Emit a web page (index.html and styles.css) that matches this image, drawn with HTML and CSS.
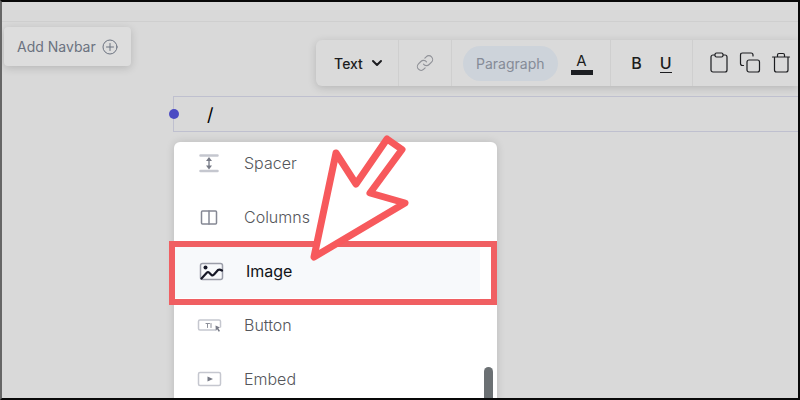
FILE: index.html
```html
<!DOCTYPE html>
<html lang="en">
<head>
<meta charset="utf-8">
<title>Page editor</title>
<link rel="stylesheet" href="styles.css">
</head>
<body>
<div class="page">
  <header class="topbar"></header>
  <main class="workspace">
    <aside class="side">
      <button class="add-navbar" type="button">Add Navbar
        <svg width="16" height="16" viewBox="0 0 16 16"><circle cx="8" cy="8" r="7"/><path d="M8 4.5v7M4.5 8h7"/></svg>
      </button>
    </aside>
    <section class="editor">
      <div class="toolbar" role="toolbar" aria-label="Formatting">
        <button class="tool tool-type" type="button">Text
          <svg width="12" height="12" viewBox="0 0 12 12"><path d="M2 4l4 4 4-4"/></svg>
        </button>
        <button class="tool tool-link" type="button" aria-label="Link">
          <svg width="18" height="18" viewBox="0 0 24 24"><path d="M10 13.500a5 5 0 0 0 7.500.5l3.200-3.200a5 5 0 0 0-7.100-7.100L11.800 5.500M14 10.500a5 5 0 0 0-7.500-.5l-3.200 3.200a5 5 0 0 0 7.100 7.100l1.800-1.800"/></svg>
        </button>
        <div class="group group-style">
          <button class="pill" type="button">Paragraph</button>
          <button class="color" type="button" aria-label="Text color">A</button>
        </div>
        <div class="group group-marks">
          <button class="mark" type="button">B</button>
          <button class="mark underline" type="button">U</button>
        </div>
        <div class="group group-actions">
          <button class="action" type="button" aria-label="Paste">
            <svg width="20" height="22" viewBox="0 0 20 22"><rect x="2" y="3" width="16" height="17" rx="2"/><rect class="clip" x="6" y="1" width="8" height="4" rx="1.500"/></svg>
          </button>
          <button class="action" type="button" aria-label="Copy">
            <svg width="22" height="22" viewBox="0 0 22 22"><rect x="8" y="8" width="12.500" height="12" rx="2"/><path d="M4.500 13.500H3.500q-2 0-2-2V3q0-2 2-2H12q2 0 2 2V4"/></svg>
          </button>
          <button class="action" type="button" aria-label="Delete">
            <svg width="20" height="22" viewBox="0 0 20 22"><path d="M1.500 5h17M3.500 5V18q0 2 2 2H15q2 0 2-2V5M6.500 5V3q0-1.500 1.500-1.500h4q1.500 0 1.500 1.500v2"/></svg>
          </button>
        </div>
      </div>
      <div class="block" contenteditable="true" role="textbox" aria-label="Paragraph block">/</div>
      <div class="menu">
        <ul class="options">
          <li><button class="option" type="button">
            <svg width="36" height="24" viewBox="0 0 36 24"><path class="faint thick" d="M10.500 4.500h17M10.500 20h17"/><path class="mid" d="M19 8v8"/><path class="solid" d="M19 6l3 4h-6zM19 18.500l3-4h-6z"/></svg>
            <span>Spacer</span></button></li>
          <li><button class="option" type="button">
            <svg width="36" height="24" viewBox="0 0 36 24"><rect class="mid" x="11.500" y="6" width="15" height="13" rx="1"/><path class="mid" d="M19 6v13"/></svg>
            <span>Columns</span></button></li>
          <li class="selected"><button class="option" type="button">
            <svg width="36" height="24" viewBox="0 0 36 24"><rect class="light" x="8.500" y="4.500" width="22" height="16" rx="2"/><circle class="dark-dot" cx="13.500" cy="8.500" r="2"/><path class="dark" d="M9.500 19.500l5.500-6q1-1 2 0l2.500 2.500q1.500 1 2.500-.5l4-4.500q1.500-1 4 .5"/></svg>
            <span>Image</span></button></li>
          <li><button class="option" type="button">
            <svg width="36" height="24" viewBox="0 0 36 24"><path class="faint" d="M26 17H10q-1.500 0-1.500-1.500v-7Q8.500 7 10 7H29q1.500 0 1.500 1.500V14"/><path class="mark-line" d="M16 10.500h3.500M17.500 10.500v4M21 10.500v4"/><path class="solid" d="M25.500 12.500l4.500 2-1.700.8 1.700 2.700-1.300.8-1.600-2.600-1.300 1.300z"/></svg>
            <span>Button</span></button></li>
          <li><button class="option" type="button">
            <svg width="36" height="24" viewBox="0 0 36 24"><rect class="faint" x="8.500" y="5.500" width="22" height="13" rx="1.500"/><path class="solid" d="M17.500 9.500l5.500 2.500-5.500 2.500z"/></svg>
            <span>Embed</span></button></li>
        </ul>
        <div class="thumb"></div>
        <div class="highlight"></div>
        <svg class="arrow" width="110" height="136" viewBox="0 0 110 136"><path d="M9 127L31 23 51 54 82 9 97 19.500 65 63 100 73z"/></svg>
      </div>
    </section>
  </main>
</div>
</body>
</html>
```
FILE: styles.css
```css
* { box-sizing: border-box; }
body {
  margin: 0;
  font-family: Inter, "Liberation Sans", sans-serif;
  font-size: 16px;
  background: #d9d9d9;
}
button {
  margin: 0;
  padding: 0;
  border: 0;
  background: none;
  font: inherit;
  color: inherit;
}
svg {
  flex: none;
  fill: none;
  stroke: currentColor;
  stroke-linecap: round;
  stroke-linejoin: round;
}
.page {
  display: flex;
  flex-direction: column;
  height: 100vh;
  overflow: hidden;
  border: 2px solid #080808;
  border-left-color: #666;
  background: #d9d9d9;
}
.topbar {
  flex: none;
  height: 20px;
  border-bottom: 1px solid #cfcfcf;
}
.workspace {
  flex: 1;
  display: grid;
  grid-template-columns: 171px minmax(0, 1fr);
}
.side { padding: 5px 0 0 2px; }
.add-navbar {
  display: flex;
  align-items: center;
  gap: 6px;
  height: 39px;
  padding: 0 13px;
  border-radius: 4px;
  background: #dddddd;
  box-shadow: 0 2px 8px rgba(0, 0, 0, .16);
  font-size: 14px;
  color: #6b7280;
}
.toolbar {
  display: flex;
  height: 46px;
  margin: 18px 0 0 143px;
  border-radius: 6px 0 0 6px;
  background: #dadada;
  box-shadow: 0 2px 8px rgba(0, 0, 0, .16);
  color: #1c1d20;
}
.tool, .group {
  flex: none;
  display: flex;
  align-items: center;
  justify-content: center;
  border-right: 1px solid #cfcfcf;
}
.tool-type {
  width: 83px;
  gap: 8px;
  padding-left: 3px;
  font-size: 14px;
  font-weight: 500;
}
.tool-type svg { stroke-width: 2; }
.tool-link { width: 53px; color: #909298; }
.tool-link svg { stroke-width: 1.5; }
.group-style { width: 159px; gap: 13px; justify-content: flex-start; padding-left: 11px; }
.group-marks { width: 82px; gap: 18px; }
.group-actions { gap: 10px; padding-left: 16px; border-right: 0; }
.pill {
  height: 35px;
  padding: 0 13px;
  border-radius: 18px;
  background: #cdd3da;
  font-size: 14px;
  color: #858b97;
}
.color {
  width: 22px;
  border-bottom: 5px solid #1c1e22;
  font-size: 15px;
  line-height: 18px;
}
.mark { font-size: 16px; font-weight: 500; line-height: 18px; }
.underline { border-bottom: 1px solid #1c1d20; }
.action { display: flex; }
.action svg { stroke-width: 1.2; }
.clip { fill: #dadada; }
.block {
  position: relative;
  height: 36px;
  margin-top: 10px;
  padding-left: 33px;
  border: 1px solid #bfc0cf;
  border-right: 0;
  font-size: 18px;
  line-height: 36px;
  color: #000;
}
.block::before {
  content: "";
  position: absolute;
  left: -5px;
  top: 12px;
  width: 10px;
  height: 10px;
  border-radius: 50%;
  background: #4b4bc3;
}
.menu {
  position: relative;
  display: flow-root;
  width: 323px;
  margin: 10px 0 0 1px;
  border-radius: 6px;
  background: #fff;
  box-shadow: 0 0 8px rgba(0, 0, 0, .14);
}
.options {
  margin: -6px 0 0;
  padding: 0;
  list-style: none;
}
.selected {
  margin-right: 17px;
  background: #f7f9fb;
}
.option {
  display: flex;
  align-items: center;
  gap: 18px;
  width: 100%;
  height: 54px;
  padding-left: 16px;
  text-align: left;
  font-weight: 300;
  color: #55565b;
}
.option svg { stroke-width: 1.5; }
.selected .option {
  padding-left: 18px;
  font-weight: 400;
  color: #111318;
}
.faint { stroke: #c5c7cf; }
.thick { stroke-width: 2.5; }
.mid { stroke: #858894; }
.light { stroke: #9a9da8; }
.dark { stroke: #161827; stroke-width: 2.2; }
.dark-dot { fill: #161827; stroke: none; }
.solid { fill: #777a86; stroke: none; }
.mark-line { stroke: #8d909a; stroke-width: 1; }
.thumb {
  position: absolute;
  right: 4px;
  top: 225px;
  bottom: 0;
  width: 9px;
  border-radius: 5px;
  background: #6b7073;
}
.highlight {
  position: absolute;
  left: -5px;
  right: 0;
  top: 99px;
  height: 64px;
  border: 6px solid #f05f62;
}
.arrow {
  position: absolute;
  left: 131px;
  top: -12px;
}
.arrow path {
  fill: #fff;
  stroke: #f7595c;
  stroke-width: 7;
}
```
